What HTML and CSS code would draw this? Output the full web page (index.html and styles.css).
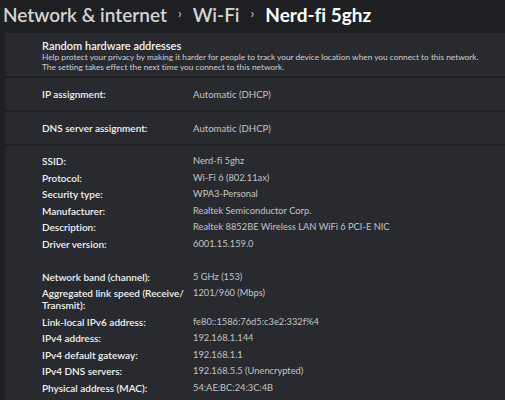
FILE: index.html
```html
<!DOCTYPE html>
<html lang="en">
<head>
<meta charset="utf-8">
<title>Nerd-fi 5ghz</title>
<link rel="stylesheet" href="styles.css">
</head>
<body>
<nav class="crumbs">
  <span class="crumb">Network &amp; internet</span>
  <span class="chev">&#x203A;</span>
  <span class="crumb">Wi-Fi</span>
  <span class="chev">&#x203A;</span>
  <span class="crumb current">Nerd-fi 5ghz</span>
</nav>
<main class="panel">
  <section class="card intro">
    <div class="intro-title">Random hardware addresses</div>
    <p class="intro-desc">Help protect your privacy by making it harder for people to track your device location when you connect to this network.<br>The setting takes effect the next time you connect to this network.</p>
  </section>
  <section class="card setting">
    <span class="label">IP assignment:</span>
    <span class="value">Automatic (DHCP)</span>
  </section>
  <section class="card setting">
    <span class="label">DNS server assignment:</span>
    <span class="value">Automatic (DHCP)</span>
  </section>
  <section class="card props">
    <dl class="grid">
      <dt class="label">SSID:</dt><dd class="value">Nerd-fi 5ghz</dd>
      <dt class="label">Protocol:</dt><dd class="value">Wi-Fi 6 (802.11ax)</dd>
      <dt class="label">Security type:</dt><dd class="value">WPA3-Personal</dd>
      <dt class="label">Manufacturer:</dt><dd class="value">Realtek Semiconductor Corp.</dd>
      <dt class="label">Description:</dt><dd class="value">Realtek 8852BE Wireless LAN WiFi 6 PCI-E NIC</dd>
      <dt class="label">Driver version:</dt><dd class="value">6001.15.159.0</dd>
    </dl>
    <dl class="grid second">
      <dt class="label">Network band (channel):</dt><dd class="value">5 GHz (153)</dd>
      <dt class="label">Aggregated link speed (Receive/<br>Transmit):</dt><dd class="value">1201/960 (Mbps)</dd>
      <dt class="label">Link-local IPv6 address:</dt><dd class="value">fe80::1586:76d5:c3e2:332f%4</dd>
      <dt class="label">IPv4 address:</dt><dd class="value">192.168.1.144</dd>
      <dt class="label">IPv4 default gateway:</dt><dd class="value">192.168.1.1</dd>
      <dt class="label">IPv4 DNS servers:</dt><dd class="value">192.168.5.5 (Unencrypted)</dd>
      <dt class="label">Physical address (MAC):</dt><dd class="value">54:AE:BC:24:3C:4B</dd>
    </dl>
  </section>
</main>
</body>
</html>
```

FILE: styles.css
```css
* { box-sizing: border-box; }

html, body {
  margin: 0;
  padding: 0;
  background: #1e2024;
  font-family: Lato, "Open Sans", "Noto Sans", sans-serif;
  font-variant-ligatures: none;
  color: #f0f0f0;
  overflow: hidden;
}

.crumbs {
  display: flex;
  align-items: center;
  height: 30px;
  padding: 0 0 2px 3px;
  font-size: 19px;
  font-weight: 600;
  white-space: nowrap;
}

.crumb { color: #d4d4d4; }
.crumb.current { color: #ffffff; font-weight: 700; }

.chev {
  color: #bdbdbd;
  font-size: 13px;
  margin: 0 11px 2px 11px;
}

.panel {
  margin: 3px 0 0 5px;
  background: #1e2024;
  display: flex;
  flex-direction: column;
  gap: 2px;
}

.card {
  background: #282a30;
  padding-left: 37px;
}

.intro {
  padding-top: 6px;
  padding-bottom: 4px;
}

.intro-title {
  font-size: 11px;
  line-height: 13px;
  font-weight: 600;
  color: #f4f4f4;
}

.intro-desc {
  margin: 1px 0 0 0;
  font-size: 8.3px;
  line-height: 9.5px;
  color: #d0d0d0;
}

.setting {
  display: grid;
  grid-template-columns: 151px 1fr;
  align-items: center;
  height: 32px;
  font-size: 10px;
}

.setting .value { font-size: 9.6px; }

.props {
  padding-top: 9px;
  padding-bottom: 10px;
}

.grid {
  display: grid;
  grid-template-columns: 151px 1fr;
  row-gap: 4.5px;
  margin: 0;
  font-size: 10px;
  line-height: 12px;
}

.grid.second { margin-top: 21px; }

.grid dt, .grid dd { margin: 0; }

.grid dd { font-size: 9.3px; }

.label {
  color: #f2f2f2;
  font-weight: 600;
}

.value {
  color: #c4c4c4;
  font-weight: 400;
}
```
